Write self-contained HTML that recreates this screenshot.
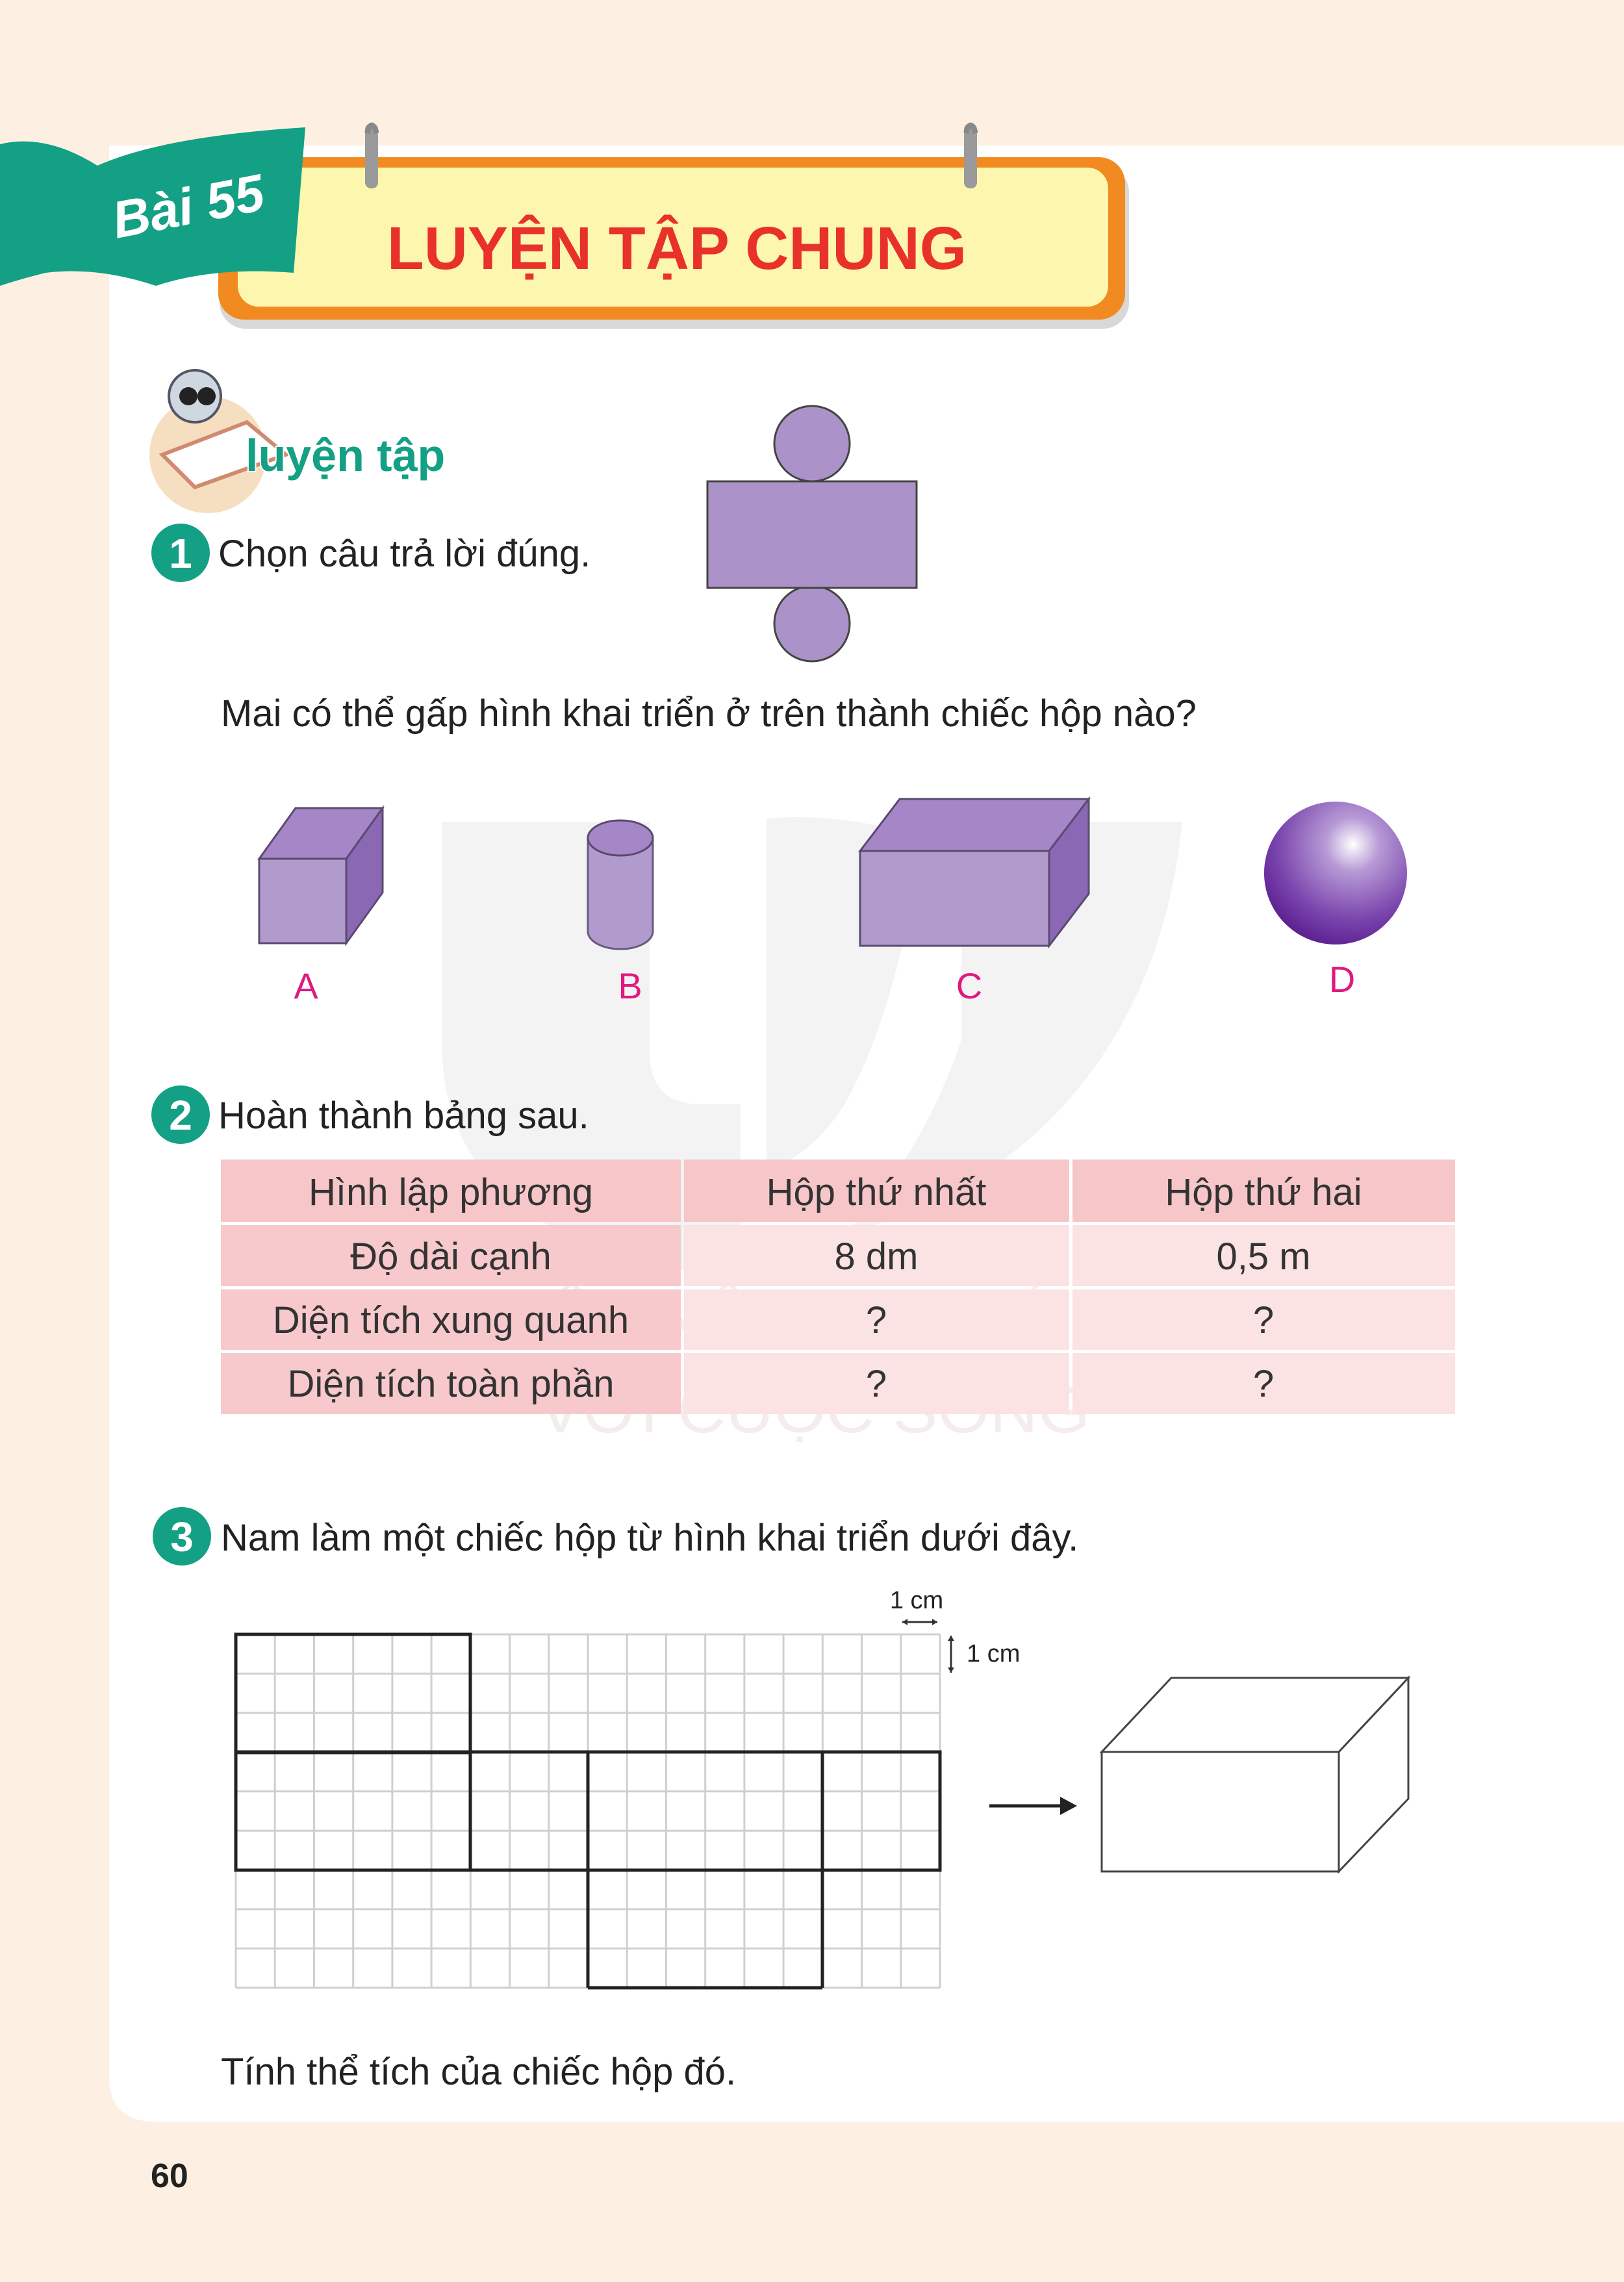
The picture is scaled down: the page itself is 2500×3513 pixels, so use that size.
<!DOCTYPE html>
<html><head><meta charset="utf-8"><style>
html,body{margin:0;padding:0;background:#fdf0e2;}
svg{display:block;}
text{font-family:"Liberation Sans",sans-serif;}
</style></head><body>
<svg width="2500" height="3513" viewBox="0 0 2500 3513" xmlns="http://www.w3.org/2000/svg">
<defs>
<radialGradient id="sph" cx="0.62" cy="0.3" r="0.75">
<stop offset="0" stop-color="#ffffff"/><stop offset="0.25" stop-color="#b79ad6"/><stop offset="0.7" stop-color="#7a45ad"/><stop offset="1" stop-color="#5a1d90"/>
</radialGradient>
</defs>
<rect width="2500" height="3513" fill="#fdf0e2"/>
<path d="M168 224 H2500 V3266 H238 Q168 3266 168 3196 Z" fill="#ffffff"/>
<!-- watermark -->
<g fill="#f3f3f3">
<path d="M680 1265 H1000 V1620 Q1000 1700 1080 1700 H1140 L1140 1960 Q900 1960 760 1820 Q680 1740 680 1600 Z"/>
<path d="M1180 1260 Q1300 1250 1420 1290 Q1380 1560 1300 1700 Q1250 1780 1180 1800 Z"/>
<path d="M1480 1265 H1820 Q1790 1560 1600 1740 Q1480 1850 1300 1900 Q1420 1780 1480 1600 Z"/>
</g>
<g fill="#f5ecec" font-size="100">
<text x="772" y="2060" textLength="950" lengthAdjust="spacingAndGlyphs">KẾT NỐI TRI THỨC</text>
<text x="828" y="2205" textLength="850" lengthAdjust="spacingAndGlyphs">VỚI CUỘC SỐNG</text>
</g>
<!-- title box -->
<rect x="338" y="256" width="1400" height="250" rx="40" fill="#d8d8d8"/>
<rect x="336" y="242" width="1396" height="250" rx="40" fill="#f28a22"/>
<rect x="366" y="258" width="1340" height="214" rx="32" fill="#fdf6ae"/>
<text x="1042" y="414" font-size="93" font-weight="bold" fill="#e8312a" text-anchor="middle">LUYỆN TẬP CHUNG</text>
<!-- pins -->
<g fill="#9a9a9a"><rect x="562" y="190" width="20" height="100" rx="9"/><rect x="1484" y="190" width="20" height="100" rx="9"/></g>
<g fill="none" stroke="#888" stroke-width="8"><path d="M565 205 Q572 180 580 205"/><path d="M1487 205 Q1494 180 1502 205"/></g>
<!-- Bai 55 flag -->
<path d="M0 222 Q70 205 150 255 Q250 210 470 196 L452 420 Q330 410 240 440 Q150 410 70 420 Q30 430 0 440 Z" fill="#13a084"/>
<text x="290" y="345" font-size="80" font-weight="bold" font-style="italic" fill="#fff" text-anchor="middle" transform="rotate(-11 290 320)">Bài 55</text>
<!-- luyen tap icon -->
<circle cx="320" cy="700" r="90" fill="#f6dfc0"/>
<path d="M250 700 L380 650 L440 700 L300 750 Z" fill="#fff" stroke="#d08a70" stroke-width="6"/>
<circle cx="300" cy="610" r="40" fill="#cfd8e0" stroke="#556" stroke-width="4"/>
<circle cx="290" cy="610" r="14" fill="#222"/><circle cx="318" cy="610" r="14" fill="#222"/>
<text x="378" y="725" font-size="70" font-weight="bold" fill="#13a084" stroke="#fff" stroke-width="4" paint-order="stroke">luyện tập</text>
<!-- Q1 -->
<circle cx="278" cy="851" r="45" fill="#13a084"/>
<text x="278" y="874" font-size="64" font-weight="bold" fill="#fff" text-anchor="middle">1</text>
<text x="336" y="872" font-size="58" fill="#222">Chọn câu trả lời đúng.</text>
<g fill="#ab93c9" stroke="#444" stroke-width="3">
<circle cx="1250" cy="683" r="58"/><circle cx="1250" cy="960" r="58"/>
<rect x="1089" y="741" width="322" height="164"/>
</g>
<text x="340" y="1118" font-size="58" fill="#222">Mai có thể gấp hình khai triển ở trên thành chiếc hộp nào?</text>
<!-- A cube -->
<polygon points="399,1322 455,1244 589,1244 533,1322" fill="#a586c6" stroke="#5a4a70" stroke-width="3"/>
<polygon points="533,1322 589,1244 589,1374 533,1452" fill="#8a68b3" stroke="#5a4a70" stroke-width="3"/>
<rect x="399" y="1322" width="134" height="130" fill="#b09bcc" stroke="#5a4a70" stroke-width="3"/>
<!-- B cylinder -->
<path d="M905 1290 V1434 A50 27 0 0 0 1005 1434 V1290 Z" fill="#b09bcc" stroke="#6a5a80" stroke-width="3"/>
<ellipse cx="955" cy="1290" rx="50" ry="27" fill="#a586c6" stroke="#5a4a70" stroke-width="3"/>
<!-- C box -->
<polygon points="1324,1310 1385,1230 1676,1230 1615,1310" fill="#a586c6" stroke="#5a4a70" stroke-width="3"/>
<polygon points="1615,1310 1676,1230 1676,1376 1615,1456" fill="#8a68b3" stroke="#5a4a70" stroke-width="3"/>
<rect x="1324" y="1310" width="291" height="146" fill="#b09bcc" stroke="#5a4a70" stroke-width="3"/>
<!-- D sphere -->
<circle cx="2056" cy="1344" r="110" fill="url(#sph)"/>
<g font-size="56" fill="#e0197f" text-anchor="middle">
<text x="471" y="1537">A</text><text x="970" y="1537">B</text><text x="1492" y="1537">C</text><text x="2066" y="1527">D</text>
</g>
<!-- Q2 -->
<circle cx="278" cy="1716" r="45" fill="#13a084"/>
<text x="278" y="1739" font-size="64" font-weight="bold" fill="#fff" text-anchor="middle">2</text>
<text x="336" y="1737" font-size="58" fill="#222">Hoàn thành bảng sau.</text>
<g>
<rect x="340" y="1785" width="708" height="96" fill="#f7c6c9"/>
<rect x="1053" y="1785" width="593" height="96" fill="#f7c6c9"/>
<rect x="1651" y="1785" width="589" height="96" fill="#f7c6c9"/>
<rect x="340" y="1886" width="708" height="94" fill="#f7c9cc"/>
<rect x="340" y="1985" width="708" height="93" fill="#f7c9cc"/>
<rect x="340" y="2083" width="708" height="94" fill="#f7c9cc"/>
<g fill="#fbe2e3">
<rect x="1053" y="1886" width="593" height="94"/><rect x="1651" y="1886" width="589" height="94"/>
<rect x="1053" y="1985" width="593" height="93"/><rect x="1651" y="1985" width="589" height="93"/>
<rect x="1053" y="2083" width="593" height="94"/><rect x="1651" y="2083" width="589" height="94"/>
</g>
</g>
<g font-size="58" fill="#333" text-anchor="middle">
<text x="694" y="1855">Hình lập phương</text><text x="1349" y="1855">Hộp thứ nhất</text><text x="1945" y="1855">Hộp thứ hai</text>
<text x="694" y="1954">Độ dài cạnh</text><text x="1349" y="1954">8 dm</text><text x="1945" y="1954">0,5 m</text>
<text x="694" y="2052">Diện tích xung quanh</text><text x="1349" y="2052">?</text><text x="1945" y="2052">?</text>
<text x="694" y="2150">Diện tích toàn phần</text><text x="1349" y="2150">?</text><text x="1945" y="2150">?</text>
</g>
<!-- Q3 -->
<circle cx="280" cy="2365" r="45" fill="#13a084"/>
<text x="280" y="2388" font-size="64" font-weight="bold" fill="#fff" text-anchor="middle">3</text>
<text x="340" y="2387" font-size="58" fill="#222">Nam làm một chiếc hộp từ hình khai triển dưới đây.</text>
<!-- grid -->
<g stroke="#cfcfcf" stroke-width="3">
<path d="M363 2516V3060M423.2 2516V3060M483.4 2516V3060M543.7 2516V3060M603.9 2516V3060M664.1 2516V3060M724.3 2516V3060M784.6 2516V3060M844.8 2516V3060M905 2516V3060M965.2 2516V3060M1025.4 2516V3060M1085.7 2516V3060M1145.9 2516V3060M1206.1 2516V3060M1266.3 2516V3060M1326.6 2516V3060M1386.8 2516V3060M1447 2516V3060"/>
<path d="M363 2516H1447M363 2576.4H1447M363 2636.9H1447M363 2697.3H1447M363 2757.8H1447M363 2818.2H1447M363 2878.7H1447M363 2939.1H1447M363 2999.6H1447M363 3060H1447"/>
</g>
<g fill="none" stroke="#222" stroke-width="5">
<rect x="363" y="2516" width="361" height="182"/>
<rect x="363" y="2697" width="1084" height="182"/>
<path d="M724 2697V2879M905 2697V3060M1266 2697V3060M905 3060H1266"/>
</g>
<text x="1411" y="2476" font-size="38" fill="#222" text-anchor="middle">1 cm</text>
<path d="M1389 2497H1443" stroke="#333" stroke-width="3"/>
<path d="M1389 2497l8-5v10zM1443 2497l-8-5v10z" fill="#333"/>
<path d="M1464 2518V2575" stroke="#333" stroke-width="3"/>
<path d="M1464 2518l-5 8h10zM1464 2575l-5-8h10z" fill="#333"/>
<text x="1488" y="2558" font-size="38" fill="#222">1 cm</text>
<path d="M1523 2780H1640" stroke="#222" stroke-width="5"/>
<path d="M1658 2780l-26-14v28z" fill="#222"/>
<g fill="#fff" stroke="#444" stroke-width="3">
<polygon points="1696,2697 1803,2583 2168,2583 2061,2697"/>
<polygon points="2061,2697 2168,2583 2168,2769 2061,2881"/>
<rect x="1696" y="2697" width="365" height="184"/>
</g>
<text x="340" y="3209" font-size="58" fill="#222">Tính thể tích của chiếc hộp đó.</text>
<text x="232" y="3367" font-size="52" font-weight="bold" fill="#222">60</text>
</svg>
</body></html>
